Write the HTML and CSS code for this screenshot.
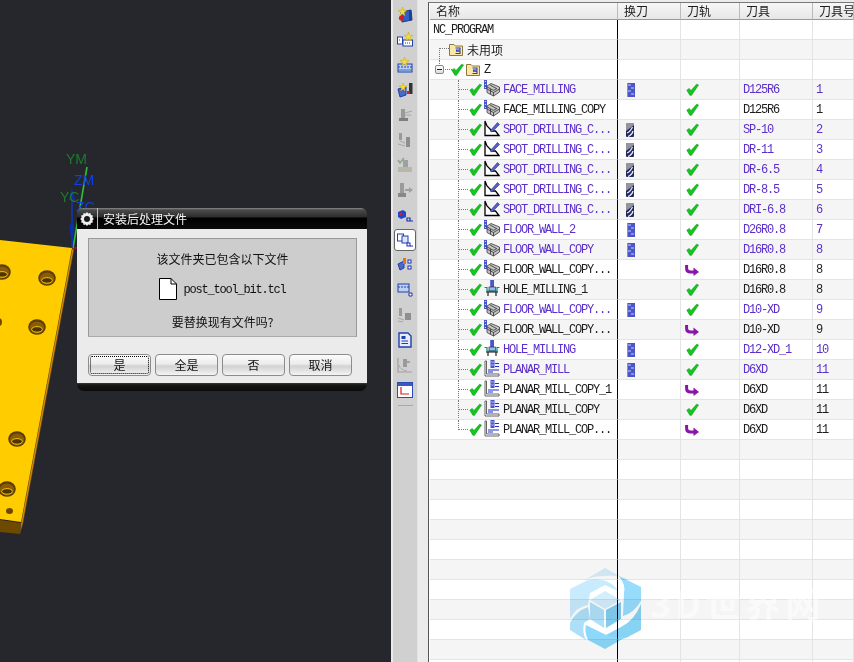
FILE: index.html
```html
<!DOCTYPE html>
<html lang="zh">
<head>
<meta charset="utf-8">
<title>安装后处理文件</title>
<link rel="stylesheet" href="styles.css">
</head>
<body>
<svg class="defs" width="0" height="0">
  <defs>
    <symbol id="check" viewBox="0 0 13 13"><path d="M0.8 7.2 L3.2 5.4 L5 7.6 L10.6 1.2 L12.6 2 L5.4 12.4 L3.8 12.2 Z" fill="#12c81e" stroke="#0a8a14" stroke-width=".5"/></symbol>
    <symbol id="arrow" viewBox="0 0 14 13"><path d="M1.6 1 V4.5 Q1.6 8 5.5 8 L9 8" fill="none" stroke="#8a14a8" stroke-width="3"/><path d="M8.5 3.6 L14 8 L8.5 12 Z" fill="#8a14a8"/></symbol>
    <symbol id="folder" viewBox="0 0 14 13"><path d="M.5 1.5 H5 L6.5 3 H13.5 V12.5 H.5 Z" fill="#fbe7a8" stroke="#8d7a3a"/><path d="M6.5 5 H11 V7 H7.5 V8.2 H11 V10.5 H6.5" fill="none" stroke="#1f3fd0" stroke-width="1.1"/></symbol>
    <symbol id="op-mill" viewBox="0 0 16 17">
      <rect x="0" y="0" width="3" height="9" fill="#4a55c8"/><rect x=".8" y="1" width="1.2" height="1" fill="#c8d0ff"/><rect x=".8" y="4" width="1.2" height="1" fill="#c8d0ff"/><rect x=".8" y="7" width="1.2" height="1" fill="#c8d0ff"/>
      <path d="M3 6 L7 3.5 L15.5 7 V12 L9.5 16 L3 12.5 Z" fill="#c4c4c4" stroke="#3a3a3a" stroke-width=".8"/>
      <path d="M3 9 L9.5 12.5 L15.5 9 M9.5 12.5 V16 M6 5 L12.5 8.5 M3.2 7 L9.5 10.4 L13 8.4 M6.5 9 V14" fill="none" stroke="#333" stroke-width=".8"/>
    </symbol>
    <symbol id="op-spot" viewBox="0 0 16 17">
      <path d="M1 1 V15.5 H15 L11.5 11 H8 L3 6 Z" fill="#fff" stroke="#000" stroke-width="1.3"/>
      <path d="M6 11 L13.5 2.5 L15.5 4.5 L8 12 Z" fill="#5561c4" stroke="#28307c" stroke-width=".6"/>
    </symbol>
    <symbol id="op-hole" viewBox="0 0 16 17">
      <rect x="6.2" y="0" width="3.8" height="7" fill="#4a55c8"/>
      <rect x="5" y="7" width="6.5" height="4" fill="#9db4e8" stroke="#333" stroke-width=".7"/>
      <path d="M.5 7.5 H3 V11 H13 V7.5 H15.5" fill="none" stroke="#0c8a8a" stroke-width="1.2"/>
      <path d="M2 12 H14 M4 12 V16 M12 12 V16" fill="none" stroke="#111" stroke-width="1.1"/>
    </symbol>
    <symbol id="op-planar" viewBox="0 0 16 17">
      <path d="M1 1 H2.5 V14 H15 V16 H1 Z" fill="#fff" stroke="#555" stroke-width=".9"/>
      <rect x="6.5" y="0" width="4" height="8" fill="#4a55c8"/><path d="M7 2 H10 M7 5 H10" stroke="#c8d0ff" stroke-width=".8"/>
      <path d="M4 10 H15 M4 12 H9" stroke="#1f2fd0" stroke-width="1.2"/>
      <path d="M11 3.5 H15 M11 6.5 H15" stroke="#1f2fd0" stroke-width="1.1"/>
    </symbol>
    <symbol id="tool-mill" viewBox="0 0 8 14">
      <rect x="0" y="0" width="8" height="14" fill="#4a55c8"/>
      <path d="M1 2 H4 M4 5 H7 M1 8 H4 M4 11 H7" stroke="#c6ccf4" stroke-width="1"/>
      <path d="M0 0 V14" stroke="#c0c4e8" stroke-width="1"/>
    </symbol>
    <symbol id="tool-drill" viewBox="0 0 8 14">
      <rect x="0" y="0" width="8" height="14" rx="1" fill="#22285e"/>
      <path d="M0 0 H8 V2 L0 8 Z" fill="#94949c"/>
      <path d="M1 10 Q4 9 6.5 4 M2 13.5 Q6 12 7 8" fill="none" stroke="#e4e6f6" stroke-width="1.3"/>
    </symbol>
    <symbol id="star" viewBox="0 0 9 9"><path d="M4.5 0 L5.5 3.2 L9 3.5 L6.2 5.5 L7.2 9 L4.5 7 L1.8 9 L2.8 5.5 L0 3.5 L3.5 3.2 Z" fill="#f6dc3c" stroke="#b89a10" stroke-width=".4"/></symbol>
    <symbol id="hole" viewBox="0 0 18 16">
      <ellipse cx="9" cy="8" rx="8.8" ry="7.8" fill="#5c3e00"/>
      <ellipse cx="9" cy="8.6" rx="7.2" ry="6" fill="#8a5c08"/>
      <ellipse cx="9" cy="10.4" rx="5.4" ry="2.8" fill="#4e3400" stroke="#f5c400" stroke-width="1"/>
    </symbol>
  </defs>
</svg>

<main class="page">
  <section class="viewport">
    <svg class="scene" viewBox="0 0 391 662" width="391" height="662">
      <path d="M0 520 L21 523 L20 534 L0 532 Z" fill="#6e4a00"/>
      <path d="M72 249 L74 249 L23 523 L20 534 L21 523 Z" fill="#d98a10" stroke="#4a3a10" stroke-width=".5"/>
      <path d="M0 240 L72 248 L21 522 L0 519 Z" fill="#ffcc00"/>
      <use href="#hole" x="38" y="270" width="18" height="16"/>
      <use href="#hole" x="-7" y="264" width="18" height="16"/>
      <use href="#hole" x="28" y="319" width="18" height="16"/>
      <use href="#hole" x="8" y="431" width="18" height="16"/>
      <use href="#hole" x="-2" y="481" width="18" height="16"/>
      <ellipse cx="-1" cy="322" rx="3" ry="4" fill="#6b4700"/>
      <ellipse cx="9.5" cy="511" rx="3.5" ry="3" fill="#6b4700"/>
      <path d="M72 248 H77" stroke="#d02020" stroke-width="1"/>
      <path d="M73 248 L87 167" stroke="#2fbf3a" stroke-width="1.6"/>
      <path d="M72 248 V200" stroke="#1038c8" stroke-width="1.4"/>
      <path d="M72 246 L69.5 228 L72 218 L74.5 228 Z" fill="#0c2fa8"/>
      <path d="M72 188 L68.5 200 H75.5 Z" fill="#0c2fa8"/>
      <text class="axis axis-g" x="66" y="164">YM</text>
      <text class="axis axis-b" x="74" y="185">ZM</text>
      <text class="axis axis-g" x="60" y="202">YC</text>
      <text class="axis axis-b" x="76" y="212">ZC</text>
    </svg>

    <div class="dialog">
      <header class="dialog-title">
        <span class="gear-box">
          <svg width="14" height="14" viewBox="0 0 14 14"><path d="M7 0 L8.3 1.6 L10.4 1.1 L10.9 3.1 L12.9 3.6 L12.4 5.7 L14 7 L12.4 8.3 L12.9 10.4 L10.9 10.9 L10.4 12.9 L8.3 12.4 L7 14 L5.7 12.4 L3.6 12.9 L3.1 10.9 L1.1 10.4 L1.6 8.3 L0 7 L1.6 5.7 L1.1 3.6 L3.1 3.1 L3.6 1.1 L5.7 1.6 Z" fill="#eee"/><circle cx="7" cy="7" r="3" fill="#1a1a1a"/></svg>
        </span>
        <span class="dialog-name">安装后处理文件</span>
      </header>
      <div class="dialog-body">
        <div class="notice">
          <p class="notice-line">该文件夹已包含以下文件</p>
          <div class="file-line">
            <svg width="18" height="22" viewBox="0 0 18 22"><path d="M.5 .5 H12 L17.5 6 V21.5 H.5 Z" fill="#fff" stroke="#000"/><path d="M12 .5 V6 H17.5" fill="none" stroke="#000"/></svg>
            <span class="file-name">post_tool_bit.tcl</span>
          </div>
          <p class="notice-line">要替换现有文件吗?</p>
        </div>
        <div class="dialog-actions">
          <button class="btn btn-focus">是</button>
          <button class="btn">全是</button>
          <button class="btn">否</button>
          <button class="btn">取消</button>
        </div>
      </div>
      <div class="dialog-foot"></div>
    </div>
  </section>

  <nav class="toolbar">
    <div class="slot"><svg width="16" height="16" viewBox="0 0 16 16"><path d="M4 5 L14 3 L15 13 L5 15 Z" fill="#2f62c8" stroke="#173a8a"/><path d="M14 3 L15 13 L12 14 V4 Z" fill="#1d3f96"/><circle cx="4.5" cy="11" r="2.6" fill="#d42020"/><use href="#star" x="1" y="0" width="9" height="9"/></svg></div>
    <div class="slot"><svg width="16" height="16" viewBox="0 0 16 16"><rect x="0.5" y="5" width="5" height="7" fill="#fff" stroke="#1f3fb0"/><rect x="6" y="8" width="9.5" height="6" fill="#fff" stroke="#1f3fb0"/><path d="M8 11 H14 M2 8 H4" stroke="#1f3fb0" stroke-dasharray="1 1"/><use href="#star" x="7" y="0" width="9" height="9"/></svg></div>
    <div class="slot"><svg width="16" height="16" viewBox="0 0 16 16"><rect x="1" y="7" width="14" height="8" fill="#bcd0f0" stroke="#1f3fb0"/><path d="M1 10 H15" stroke="#1f3fb0" stroke-dasharray="2 1"/><path d="M1 13 H15" stroke="#3070c0"/><use href="#star" x="3" y="0" width="9" height="9"/></svg></div>
    <div class="slot"><svg width="16" height="16" viewBox="0 0 16 16"><rect x="12" y="1" width="3.5" height="11" fill="#333"/><rect x="10" y="9" width="3" height="3" fill="#d02020"/><path d="M1 7 L9 5 V13 L3 15 Z" fill="#4a68c8" stroke="#1f3fb0"/><use href="#star" x="2" y="1" width="8" height="8"/></svg></div>
    <div class="slot"><svg width="16" height="16" viewBox="0 0 16 16"><rect x="4" y="2" width="4" height="12" fill="#9a9a9a"/><rect x="2" y="11" width="9" height="3" fill="#7e7e7e"/><path d="M8 6 L15 4 M8 8 L14 8" stroke="#a8a8a8" stroke-width="1.2"/></svg></div>
    <div class="slot"><svg width="16" height="16" viewBox="0 0 16 16"><rect x="2" y="1" width="3" height="7" fill="#9a9a9a"/><rect x="9" y="5" width="4" height="10" fill="#8e8e8e"/><path d="M3 9 L8 11 M1 12 L8 14" stroke="#aaa" stroke-width="1.2"/></svg></div>
    <div class="slot"><svg width="16" height="16" viewBox="0 0 16 16"><rect x="6" y="3" width="5" height="8" fill="#a0a0a0"/><rect x="1" y="10" width="14" height="5" fill="#b8b8a8"/><path d="M1 3 L3 6 L7 1" fill="none" stroke="#8aa88a" stroke-width="1.6"/></svg></div>
    <div class="slot"><svg width="16" height="16" viewBox="0 0 16 16"><rect x="3" y="1" width="4" height="11" fill="#9a9a9a"/><rect x="1" y="11" width="8" height="4" fill="#888"/><path d="M8 8 H13" stroke="#a0a0a0" stroke-width="2"/><path d="M12 5 L16 8 L12 11 Z" fill="#a0a0a0"/></svg></div>
    <div class="slot"><svg width="16" height="16" viewBox="0 0 16 16"><path d="M1 5 L6 3 L9 5 V10 L4 12 L1 10 Z" fill="#2244c8"/><circle cx="4" cy="7" r="1.6" fill="#d42020"/><path d="M10 11 H13 V14 H10 Z M13 14 H16" fill="none" stroke="#1f2fb0" stroke-width="1.2"/></svg></div>
    <div class="slot slot-on"><svg width="16" height="16" viewBox="0 0 16 16"><rect x=".5" y="2" width="6" height="7" fill="#fff" stroke="#1f3fb0"/><rect x="5" y="4" width="6" height="7" fill="#dfe6fb" stroke="#1f3fb0"/><rect x="10" y="11" width="3" height="3" fill="#fff" stroke="#1f2fb0"/><path d="M13 14 H16" stroke="#1f2fb0"/></svg></div>
    <div class="slot"><svg width="16" height="16" viewBox="0 0 16 16"><path d="M1 7 L7 4 V11 L3 13 Z" fill="#4a68c8" stroke="#1f3fb0"/><rect x="6" y="1" width="3" height="6" fill="#d87820"/><rect x="11" y="3" width="3" height="3" fill="#fff" stroke="#1f2fb0"/><rect x="11" y="9" width="3" height="3" fill="#fff" stroke="#1f2fb0"/></svg></div>
    <div class="slot"><svg width="16" height="16" viewBox="0 0 16 16"><rect x="1" y="2" width="11" height="8" fill="#bcd0f0" stroke="#1f3fb0"/><path d="M1 5 H12" stroke="#1f3fb0" stroke-dasharray="2 1"/><path d="M12 11 H15 V14 H12 Z" fill="#fff" stroke="#1f2fb0"/></svg></div>
    <div class="slot"><svg width="16" height="16" viewBox="0 0 16 16"><rect x="2" y="1" width="3" height="8" fill="#9a9a9a"/><rect x="8" y="6" width="6" height="7" fill="#8e8e8e"/><path d="M1 11 L7 13 M1 14 L6 15" stroke="#aaa" stroke-width="1.2"/></svg></div>
    <div class="slot"><svg width="16" height="16" viewBox="0 0 16 16"><path d="M2 1 H11 L14 4 V15 H2 Z" fill="#e8ecff" stroke="#1f3fb0" stroke-width="1.4"/><rect x="4.5" y="4" width="4" height="3" fill="#1f3fb0"/><path d="M4.5 9 H11 M4.5 11.5 H11" stroke="#1f3fb0"/></svg></div>
    <div class="slot"><svg width="16" height="16" viewBox="0 0 16 16"><path d="M1 1 V15 H15" fill="none" stroke="#a0a0a0" stroke-width="1.2"/><path d="M2 8 Q3 13 10 14" fill="none" stroke="#aaa"/><rect x="6" y="2" width="4" height="8" fill="#9a9a9a"/><path d="M10 5 H13" stroke="#999" stroke-width="1.6"/></svg></div>
    <div class="slot"><svg width="16" height="16" viewBox="0 0 16 16"><rect x=".5" y=".5" width="15" height="15" fill="#fff" stroke="#2a4cb8"/><rect x="1" y="1" width="14" height="3" fill="#3858c8"/><path d="M4 5 V12 H12" fill="none" stroke="#d02020" stroke-width="1.2"/></svg></div>
    <hr class="tool-rule">
  </nav>

  <div class="gutter"></div>

  <section class="navigator">
    <div class="row row-head">
      <div class="cell">名称</div><div class="cell">换刀</div><div class="cell">刀轨</div><div class="cell">刀具</div><div class="cell">刀具号</div>
    </div>
    <div class="row">
      <div class="cell cell-name"><span class="mono root">NC_PROGRAM</span></div><div class="cell"></div><div class="cell"></div><div class="cell"></div><div class="cell"></div>
    </div>
    <div class="row">
      <div class="cell cell-name unused"><span class="link-unused"></span><svg class="ic-folder" width="14" height="13"><use href="#folder"/></svg><span class="cjk-label">未用项</span></div><div class="cell"></div><div class="cell"></div><div class="cell"></div><div class="cell"></div>
    </div>
    <div class="row">
      <div class="cell cell-name group"><span class="expander"></span><span class="dash"></span><svg class="ic-check" width="13" height="13"><use href="#check"/></svg><svg class="ic-folder" width="14" height="13"><use href="#folder"/></svg><span class="mono">Z</span></div><div class="cell"></div><div class="cell"></div><div class="cell"></div><div class="cell"></div>
    </div>

    <div class="row purple">
      <div class="cell cell-name op"><span class="conn"></span><svg class="ic-check" width="13" height="13"><use href="#check"/></svg><svg class="ic-op" width="16" height="17"><use href="#op-mill"/></svg><span class="mono">FACE_MILLING</span></div>
      <div class="cell cell-tool"><svg class="ic-mill" width="8" height="14"><use href="#tool-mill"/></svg></div>
      <div class="cell cell-path"><svg width="13" height="13"><use href="#check"/></svg></div>
      <div class="cell cell-val mono">D125R6</div><div class="cell cell-num mono">1</div>
    </div>
    <div class="row">
      <div class="cell cell-name op"><span class="conn"></span><svg class="ic-check" width="13" height="13"><use href="#check"/></svg><svg class="ic-op" width="16" height="17"><use href="#op-mill"/></svg><span class="mono">FACE_MILLING_COPY</span></div>
      <div class="cell cell-tool"></div>
      <div class="cell cell-path"><svg width="13" height="13"><use href="#check"/></svg></div>
      <div class="cell cell-val mono">D125R6</div><div class="cell cell-num mono">1</div>
    </div>
    <div class="row purple">
      <div class="cell cell-name op"><span class="conn"></span><svg class="ic-check" width="13" height="13"><use href="#check"/></svg><svg class="ic-op" width="16" height="17"><use href="#op-spot"/></svg><span class="mono">SPOT_DRILLING_C...</span></div>
      <div class="cell cell-tool"><svg width="8" height="14"><use href="#tool-drill"/></svg></div>
      <div class="cell cell-path"><svg width="13" height="13"><use href="#check"/></svg></div>
      <div class="cell cell-val mono">SP-10</div><div class="cell cell-num mono">2</div>
    </div>
    <div class="row purple">
      <div class="cell cell-name op"><span class="conn"></span><svg class="ic-check" width="13" height="13"><use href="#check"/></svg><svg class="ic-op" width="16" height="17"><use href="#op-spot"/></svg><span class="mono">SPOT_DRILLING_C...</span></div>
      <div class="cell cell-tool"><svg width="8" height="14"><use href="#tool-drill"/></svg></div>
      <div class="cell cell-path"><svg width="13" height="13"><use href="#check"/></svg></div>
      <div class="cell cell-val mono">DR-11</div><div class="cell cell-num mono">3</div>
    </div>
    <div class="row purple">
      <div class="cell cell-name op"><span class="conn"></span><svg class="ic-check" width="13" height="13"><use href="#check"/></svg><svg class="ic-op" width="16" height="17"><use href="#op-spot"/></svg><span class="mono">SPOT_DRILLING_C...</span></div>
      <div class="cell cell-tool"><svg width="8" height="14"><use href="#tool-drill"/></svg></div>
      <div class="cell cell-path"><svg width="13" height="13"><use href="#check"/></svg></div>
      <div class="cell cell-val mono">DR-6.5</div><div class="cell cell-num mono">4</div>
    </div>
    <div class="row purple">
      <div class="cell cell-name op"><span class="conn"></span><svg class="ic-check" width="13" height="13"><use href="#check"/></svg><svg class="ic-op" width="16" height="17"><use href="#op-spot"/></svg><span class="mono">SPOT_DRILLING_C...</span></div>
      <div class="cell cell-tool"><svg width="8" height="14"><use href="#tool-drill"/></svg></div>
      <div class="cell cell-path"><svg width="13" height="13"><use href="#check"/></svg></div>
      <div class="cell cell-val mono">DR-8.5</div><div class="cell cell-num mono">5</div>
    </div>
    <div class="row purple">
      <div class="cell cell-name op"><span class="conn"></span><svg class="ic-check" width="13" height="13"><use href="#check"/></svg><svg class="ic-op" width="16" height="17"><use href="#op-spot"/></svg><span class="mono">SPOT_DRILLING_C...</span></div>
      <div class="cell cell-tool"><svg width="8" height="14"><use href="#tool-drill"/></svg></div>
      <div class="cell cell-path"><svg width="13" height="13"><use href="#check"/></svg></div>
      <div class="cell cell-val mono">DRI-6.8</div><div class="cell cell-num mono">6</div>
    </div>
    <div class="row purple">
      <div class="cell cell-name op"><span class="conn"></span><svg class="ic-check" width="13" height="13"><use href="#check"/></svg><svg class="ic-op" width="16" height="17"><use href="#op-mill"/></svg><span class="mono">FLOOR_WALL_2</span></div>
      <div class="cell cell-tool"><svg class="ic-mill" width="8" height="14"><use href="#tool-mill"/></svg></div>
      <div class="cell cell-path"><svg width="13" height="13"><use href="#check"/></svg></div>
      <div class="cell cell-val mono">D26R0.8</div><div class="cell cell-num mono">7</div>
    </div>
    <div class="row purple">
      <div class="cell cell-name op"><span class="conn"></span><svg class="ic-check" width="13" height="13"><use href="#check"/></svg><svg class="ic-op" width="16" height="17"><use href="#op-mill"/></svg><span class="mono">FLOOR_WALL_COPY</span></div>
      <div class="cell cell-tool"><svg class="ic-mill" width="8" height="14"><use href="#tool-mill"/></svg></div>
      <div class="cell cell-path"><svg width="13" height="13"><use href="#check"/></svg></div>
      <div class="cell cell-val mono">D16R0.8</div><div class="cell cell-num mono">8</div>
    </div>
    <div class="row">
      <div class="cell cell-name op"><span class="conn"></span><svg class="ic-check" width="13" height="13"><use href="#check"/></svg><svg class="ic-op" width="16" height="17"><use href="#op-mill"/></svg><span class="mono">FLOOR_WALL_COPY...</span></div>
      <div class="cell cell-tool"></div>
      <div class="cell cell-path"><svg class="ic-arrow" width="14" height="13"><use href="#arrow"/></svg></div>
      <div class="cell cell-val mono">D16R0.8</div><div class="cell cell-num mono">8</div>
    </div>
    <div class="row">
      <div class="cell cell-name op"><span class="conn"></span><svg class="ic-check" width="13" height="13"><use href="#check"/></svg><svg class="ic-op" width="16" height="17"><use href="#op-hole"/></svg><span class="mono">HOLE_MILLING_1</span></div>
      <div class="cell cell-tool"></div>
      <div class="cell cell-path"><svg width="13" height="13"><use href="#check"/></svg></div>
      <div class="cell cell-val mono">D16R0.8</div><div class="cell cell-num mono">8</div>
    </div>
    <div class="row purple">
      <div class="cell cell-name op"><span class="conn"></span><svg class="ic-check" width="13" height="13"><use href="#check"/></svg><svg class="ic-op" width="16" height="17"><use href="#op-mill"/></svg><span class="mono">FLOOR_WALL_COPY...</span></div>
      <div class="cell cell-tool"><svg class="ic-mill" width="8" height="14"><use href="#tool-mill"/></svg></div>
      <div class="cell cell-path"><svg width="13" height="13"><use href="#check"/></svg></div>
      <div class="cell cell-val mono">D10-XD</div><div class="cell cell-num mono">9</div>
    </div>
    <div class="row">
      <div class="cell cell-name op"><span class="conn"></span><svg class="ic-check" width="13" height="13"><use href="#check"/></svg><svg class="ic-op" width="16" height="17"><use href="#op-mill"/></svg><span class="mono">FLOOR_WALL_COPY...</span></div>
      <div class="cell cell-tool"></div>
      <div class="cell cell-path"><svg class="ic-arrow" width="14" height="13"><use href="#arrow"/></svg></div>
      <div class="cell cell-val mono">D10-XD</div><div class="cell cell-num mono">9</div>
    </div>
    <div class="row purple">
      <div class="cell cell-name op"><span class="conn"></span><svg class="ic-check" width="13" height="13"><use href="#check"/></svg><svg class="ic-op" width="16" height="17"><use href="#op-hole"/></svg><span class="mono">HOLE_MILLING</span></div>
      <div class="cell cell-tool"><svg class="ic-mill" width="8" height="14"><use href="#tool-mill"/></svg></div>
      <div class="cell cell-path"><svg width="13" height="13"><use href="#check"/></svg></div>
      <div class="cell cell-val mono">D12-XD_1</div><div class="cell cell-num mono">10</div>
    </div>
    <div class="row purple">
      <div class="cell cell-name op"><span class="conn"></span><svg class="ic-check" width="13" height="13"><use href="#check"/></svg><svg class="ic-op" width="16" height="17"><use href="#op-planar"/></svg><span class="mono">PLANAR_MILL</span></div>
      <div class="cell cell-tool"><svg class="ic-mill" width="8" height="14"><use href="#tool-mill"/></svg></div>
      <div class="cell cell-path"><svg width="13" height="13"><use href="#check"/></svg></div>
      <div class="cell cell-val mono">D6XD</div><div class="cell cell-num mono">11</div>
    </div>
    <div class="row">
      <div class="cell cell-name op"><span class="conn"></span><svg class="ic-check" width="13" height="13"><use href="#check"/></svg><svg class="ic-op" width="16" height="17"><use href="#op-planar"/></svg><span class="mono">PLANAR_MILL_COPY_1</span></div>
      <div class="cell cell-tool"></div>
      <div class="cell cell-path"><svg class="ic-arrow" width="14" height="13"><use href="#arrow"/></svg></div>
      <div class="cell cell-val mono">D6XD</div><div class="cell cell-num mono">11</div>
    </div>
    <div class="row">
      <div class="cell cell-name op"><span class="conn"></span><svg class="ic-check" width="13" height="13"><use href="#check"/></svg><svg class="ic-op" width="16" height="17"><use href="#op-planar"/></svg><span class="mono">PLANAR_MILL_COPY</span></div>
      <div class="cell cell-tool"></div>
      <div class="cell cell-path"><svg width="13" height="13"><use href="#check"/></svg></div>
      <div class="cell cell-val mono">D6XD</div><div class="cell cell-num mono">11</div>
    </div>
    <div class="row">
      <div class="cell cell-name op"><span class="conn conn-last"></span><svg class="ic-check" width="13" height="13"><use href="#check"/></svg><svg class="ic-op" width="16" height="17"><use href="#op-planar"/></svg><span class="mono">PLANAR_MILL_COP...</span></div>
      <div class="cell cell-tool"></div>
      <div class="cell cell-path"><svg class="ic-arrow" width="14" height="13"><use href="#arrow"/></svg></div>
      <div class="cell cell-val mono">D6XD</div><div class="cell cell-num mono">11</div>
    </div>

    <div class="row"><div class="cell cell-name"></div><div class="cell"></div><div class="cell"></div><div class="cell"></div><div class="cell"></div></div>
    <div class="row"><div class="cell cell-name"></div><div class="cell"></div><div class="cell"></div><div class="cell"></div><div class="cell"></div></div>
    <div class="row"><div class="cell cell-name"></div><div class="cell"></div><div class="cell"></div><div class="cell"></div><div class="cell"></div></div>
    <div class="row"><div class="cell cell-name"></div><div class="cell"></div><div class="cell"></div><div class="cell"></div><div class="cell"></div></div>
    <div class="row"><div class="cell cell-name"></div><div class="cell"></div><div class="cell"></div><div class="cell"></div><div class="cell"></div></div>
    <div class="row"><div class="cell cell-name"></div><div class="cell"></div><div class="cell"></div><div class="cell"></div><div class="cell"></div></div>
    <div class="row"><div class="cell cell-name"></div><div class="cell"></div><div class="cell"></div><div class="cell"></div><div class="cell"></div></div>
    <div class="row"><div class="cell cell-name"></div><div class="cell"></div><div class="cell"></div><div class="cell"></div><div class="cell"></div></div>
    <div class="row"><div class="cell cell-name"></div><div class="cell"></div><div class="cell"></div><div class="cell"></div><div class="cell"></div></div>
    <div class="row"><div class="cell cell-name"></div><div class="cell"></div><div class="cell"></div><div class="cell"></div><div class="cell"></div></div>
    <div class="row"><div class="cell cell-name"></div><div class="cell"></div><div class="cell"></div><div class="cell"></div><div class="cell"></div></div>
    <div class="row"><div class="cell cell-name"></div><div class="cell"></div><div class="cell"></div><div class="cell"></div><div class="cell"></div></div>

    <div class="watermark">
      <svg width="74" height="84" viewBox="572 566 74 84">
        <path d="M607 567 L631 580 Q627 574 606 575 Q590 575 578 584 Z" fill="#d8f0fc"/>
        <path d="M572 588 L590 579 Q612 576 620 590 L607 584 L592 592 L590 604 Q578 606 572 618 Z" fill="#c8ebfd"/>
        <path d="M621 575 L643 586 L643 600 Q636 612 625 615 L626 592 Q628 584 621 575 Z" fill="#98dcfb"/>
        <path d="M643 603 L643 629 L628 637 Q615 640 608 634 L623 626 Q636 620 643 603 Z" fill="#88d2f3"/>
        <path d="M588 624 L604 632 Q616 638 628 636 L607 648 L590 639 Q586 630 588 624 Z" fill="#8cd9fc"/>
        <path d="M572 622 Q578 610 590 606 L592 618 L586 622 Q584 632 588 639 L572 629 Z" fill="#ade0f8"/>
        <path d="M592 599 L607 590 L623 599 L607 608 Z" fill="#d4eefb"/>
        <path d="M592 601 L606 609 V627 L592 618 Z" fill="#afe0f9"/>
        <path d="M608 609 L623 601 V618 L608 627 Z" fill="#82ccf0"/>
      </svg>
      <span class="wm-text">3D世界网</span>
    </div>
  </section>
</main>
</body>
</html>
```

FILE: styles.css
```css
* { box-sizing: border-box; }
html, body { margin: 0; padding: 0; height: 100%; overflow: hidden; }
body { font-family: "Noto Sans CJK SC", "Liberation Sans", sans-serif; font-size: 12px; color: #111; background: #ebebeb; }
.defs { display: block; height: 0; width: 0; }

.page { display: flex; width: 854px; height: 662px; overflow: hidden; }

.viewport { position: relative; flex: 0 0 391px; height: 662px; background: #25272c; overflow: hidden; }
.scene { display: block; }
.axis { font-family: "Liberation Sans", sans-serif; font-size: 14px; }
.axis-g { fill: #1f7a2c; }
.axis-b { fill: #1040e0; }

.dialog { position: absolute; left: 77px; top: 208px; width: 290px; height: 183px; display: flex; flex-direction: column; border-radius: 6px 6px 7px 7px; overflow: hidden; }
.dialog-title { flex: 0 0 21px; display: flex; align-items: center; background: linear-gradient(#8a8a8a 0, #4a4a4a 2px, #2c2c2c 9px, #000 10px, #0b0b0b 100%); color: #f4f4f4; }
.gear-box { flex: 0 0 21px; height: 21px; display: flex; align-items: center; justify-content: center; border-right: 1px solid #bdbdbd; padding-top: 1px; }
.dialog-name { margin-left: 5px; font-size: 12px; line-height: 21px; }
.dialog-body { flex: 1; background: #ebebeb; padding: 9px 10px 0 11px; display: flex; flex-direction: column; }
.notice { height: 99px; background: #cdcdcd; border: 1px solid #999; border-bottom-color: #aaa; display: flex; flex-direction: column; align-items: center; padding-top: 11px; }
.notice-line { margin: 0; font-size: 12px; line-height: 18px; color: #111; }
.file-line { display: flex; align-items: center; gap: 6px; margin-top: 10px; margin-bottom: 13px; height: 22px; }
.file-name { font-family: "Liberation Mono", monospace; font-size: 12px; letter-spacing: -1.2px; color: #111; padding-top: 2px; }
.dialog-actions { display: flex; gap: 4px; margin-top: 17px; }
.btn { width: 63px; height: 22px; padding: 0; font: 12px/1 "Noto Sans CJK SC", sans-serif; color: #111; border: 1px solid #8c8c8c; border-radius: 4px; background: linear-gradient(#fbfbfb 0, #ececec 45%, #d2d2d2 55%, #e4e4e4 80%, #f4f4f4 100%); }
.btn-focus { outline: 1px dotted #000; outline-offset: -3px; }
.dialog-foot { flex: 0 0 8px; background: linear-gradient(#3a3a3a 0, #161616 2px, #0a0a0a 100%); }

.toolbar { flex: 0 0 27px; height: 662px; background: #d0d0d0; border-left: 2px solid #ebebeb; border-right: 1px solid #e2e2e2; padding-top: 2px; display: flex; flex-direction: column; align-items: center; }
.slot { flex: 0 0 25px; width: 22px; display: flex; align-items: center; justify-content: center; }
.slot-on { background: #fff; border: 1px solid #666; border-radius: 3px; height: 22px; flex: 0 0 22px; margin: 1.5px 0; }
.tool-rule { width: 15px; margin: 3px 0 0; border: 0; border-top: 1px solid #aaa; }

.gutter { flex: 0 0 10px; background: #ebebeb; }

.navigator { position: relative; flex: 1; height: 660px; margin-top: 2px; background: #fff; border-left: 1px solid #555; border-top: 1px solid #777; padding-left: 1px; overflow: hidden; }
.row { display: grid; grid-template-columns: 188px 63px 59px 73px 41px; height: 20px; color: #1c1c1c; }
.row:nth-child(even) { background: #fff; }
.row:nth-child(odd) { background: #f5f5f5; }
.cell { display: flex; align-items: center; height: 20px; border-right: 1px solid #e4e4e4; border-bottom: 1px solid #e4e4e4; white-space: nowrap; overflow: hidden; }
.cell-name { border-right: 1px solid #000; position: relative; }
.row-head { height: 17px; }
.row:nth-child(1).row-head { background: linear-gradient(#f6f6f6, #e6e6e6); }
.row-head .cell { height: 17px; border-right: 1px solid #bbb; border-bottom: 1px solid #999; padding-left: 6px; font-size: 12px; line-height: 16px; }

.mono { font-family: "Liberation Mono", monospace; font-size: 12px; letter-spacing: -1.2px; padding-top: 1px; }
.root { margin-left: 3px; }
.purple .mono { color: #5b2fc9; }

.link-unused { width: 10px; height: 11px; margin-left: 9px; flex: none; align-self: flex-end; border-left: 1px dotted #777; display: flex; align-items: flex-start; }
.link-unused::after { content: ""; flex: 1; border-top: 1px dotted #777; }
.ic-folder { flex: none; }
.cjk-label { margin-left: 4px; font-size: 12px; }

.group::before { content: ""; position: absolute; left: 9px; top: 0; height: 6px; border-left: 1px dotted #777; }
.expander { width: 9px; height: 9px; margin-left: 5px; flex: none; border: 1px solid #8a8a8a; background: linear-gradient(#fff, #ddd); border-radius: 2px; display: flex; align-items: center; justify-content: center; }
.expander::after { content: ""; width: 5px; border-top: 1px solid #222; }
.dash { width: 7px; margin: 0 0 0 1px; flex: none; border-top: 1px dotted #777; }
.group .ic-check { margin-right: 2px; flex: none; margin-left: -1px; }
.group .mono { margin-left: 4px; }

.op { padding-left: 28px; }
.conn { flex: 0 0 11px; width: 11px; height: 20px; border-left: 1px dotted #777; display: flex; align-items: center; }
.conn::after { content: ""; flex: 0 0 9px; border-top: 1px dotted #777; }
.conn-last { height: 10px; align-self: flex-start; align-items: flex-end; }
.op .ic-check { flex: none; }
.ic-op { flex: none; margin-left: 2px; margin-right: 3px; margin-top: -3px; }

.cell-tool { padding-left: 8px; }
.ic-mill { margin-left: 1px; }
.cell-path { padding-left: 5px; }
.ic-arrow { margin-left: -1px; margin-top: 2px; }
.cell-val { padding-left: 3px; }
.cell-num { padding-left: 3px; }

.watermark { position: absolute; left: 141px; top: 564px; display: flex; align-items: center; gap: 6px; pointer-events: none; }
.watermark svg { mix-blend-mode: multiply; display: block; }
.wm-text { font-family: "Noto Sans CJK SC", sans-serif; font-weight: 700; font-size: 36px; line-height: 40px; color: rgba(255,255,255,.5); letter-spacing: 4px; white-space: nowrap; margin-top: -14px; }
```
